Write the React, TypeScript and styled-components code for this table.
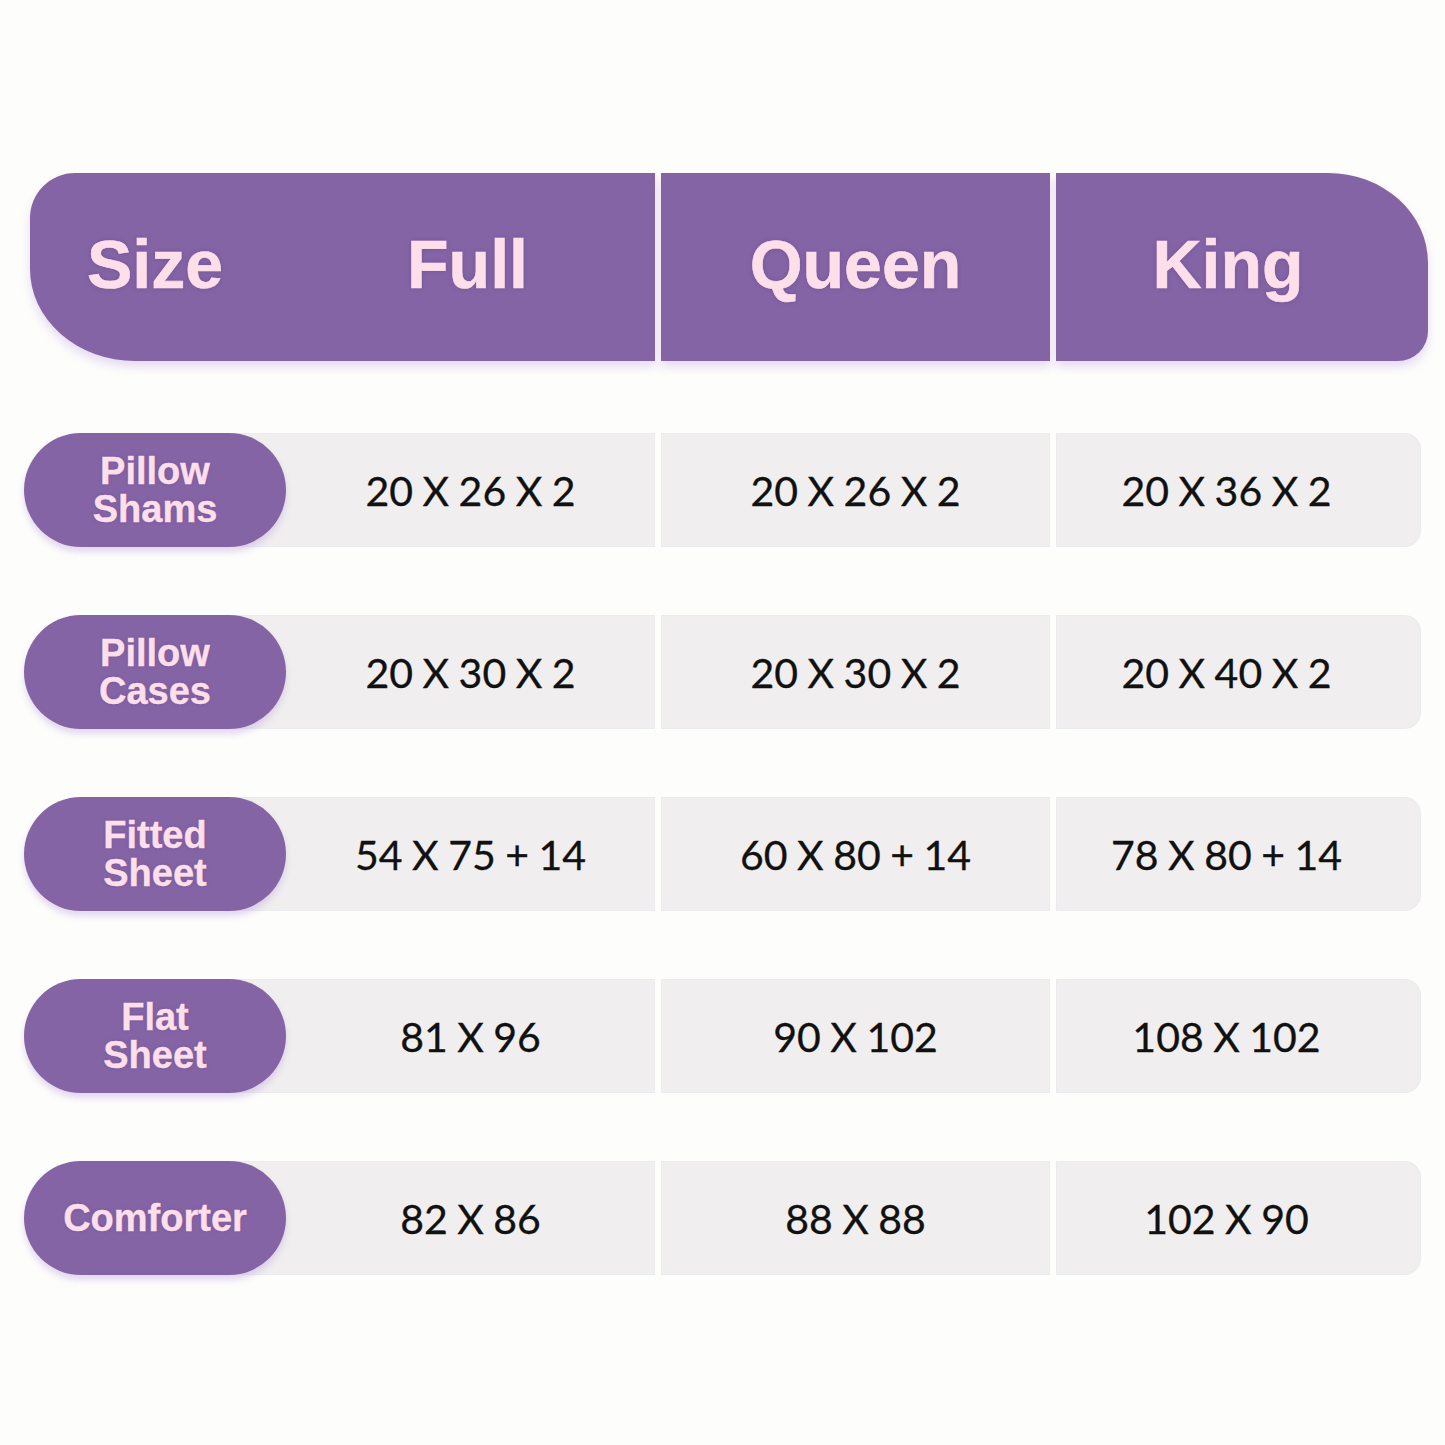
import styled, { createGlobalStyle } from 'styled-components';

const purple = '#8464a5';
const pink = '#fddfea';
const cellGrey = '#f0eeee';

const GlobalStyle = createGlobalStyle`
  html, body {
    margin: 0;
    padding: 0;
    background: #fdfdfb;
  }
`;

const columns = ['Full', 'Queen', 'King'];

const rows = [
  { label: ['Pillow', 'Shams'], values: ['20 X 26 X 2', '20 X 26 X 2', '20 X 36 X 2'] },
  { label: ['Pillow', 'Cases'], values: ['20 X 30 X 2', '20 X 30 X 2', '20 X 40 X 2'] },
  { label: ['Fitted', 'Sheet'], values: ['54 X 75 + 14', '60 X 80 + 14', '78 X 80 + 14'] },
  { label: ['Flat', 'Sheet'], values: ['81 X 96', '90 X 102', '108 X 102'] },
  { label: ['Comforter'], values: ['82 X 86', '88 X 88', '102 X 90'] },
];

export default function App() {
  return (
    <Page>
      <GlobalStyle />
      <Header>
        <HeadLead>
          <HeadText $width={250}>Size</HeadText>
          <HeadText $width={375}>{columns[0]}</HeadText>
        </HeadLead>
        <HeadCell $width={389}>
          <HeadText>{columns[1]}</HeadText>
        </HeadCell>
        <HeadCell $width={372} $last>
          <HeadText $shift={-14}>{columns[2]}</HeadText>
        </HeadCell>
      </Header>

      <Body>
        {rows.map((row) => (
          <Row key={row.label.join(' ')}>
            <Pill>
              {row.label.map((line) => (
                <span key={line}>{line}</span>
              ))}
            </Pill>
            <Cell $width={369} $first>
              {row.values[0]}
            </Cell>
            <Cell $width={389}>{row.values[1]}</Cell>
            <Cell $width={365} $last $shift={-12}>
              {row.values[2]}
            </Cell>
          </Row>
        ))}
      </Body>
    </Page>
  );
}

const Page = styled.div`
  width: 1445px;
  height: 1445px;
  box-sizing: border-box;
  padding-top: 173px;
  background: #fdfdfb;
  overflow: hidden;
`;

const Header = styled.div`
  display: flex;
  gap: 6px;
  margin-left: 30px;
  height: 188px;
  filter: drop-shadow(0 6px 5px rgba(190, 160, 230, 0.35));
`;

const HeadLead = styled.div`
  display: flex;
  width: 625px;
  background: ${purple};
  border-radius: 45px 0 0 105px / 45px 0 0 92px;
`;

const HeadCell = styled.div<{ $width: number; $last?: boolean }>`
  display: flex;
  width: ${(p) => p.$width}px;
  background: ${purple};
  border-radius: ${(p) => (p.$last ? '0 100px 30px 0 / 0 90px 30px 0' : '0')};
`;

const HeadText = styled.div<{ $width?: number; $shift?: number }>`
  display: flex;
  align-items: center;
  justify-content: center;
  flex: ${(p) => (p.$width ? `0 0 ${p.$width}px` : '1')};
  padding-bottom: 6px;
  transform: translateX(${(p) => p.$shift ?? 0}px);
  font-family: 'Liberation Sans', Arial, sans-serif;
  font-weight: 700;
  font-size: 68px;
  color: ${pink};
  -webkit-text-stroke: 0.6px ${pink};
  text-shadow: 0 0 4px rgba(100, 60, 140, 0.55);
`;

const Body = styled.div`
  display: flex;
  flex-direction: column;
  gap: 68px;
  margin-top: 72px;
  margin-left: 24px;
`;

const Row = styled.div`
  display: flex;
  align-items: stretch;
  gap: 6px;
  height: 114px;
`;

const Pill = styled.div`
  position: relative;
  z-index: 1;
  display: flex;
  flex-direction: column;
  align-items: center;
  justify-content: center;
  width: 262px;
  margin-right: -6px;
  border-radius: 57px;
  background: ${purple};
  box-shadow: 0 5px 6px rgba(180, 150, 220, 0.35);
  font-family: 'Liberation Sans', Arial, sans-serif;
  font-weight: 700;
  font-size: 38px;
  line-height: 38px;
  color: ${pink};
  -webkit-text-stroke: 0.4px ${pink};
  text-shadow: 0 0 3px rgba(100, 60, 140, 0.5);
`;

const Cell = styled.div<{ $width: number; $first?: boolean; $last?: boolean; $shift?: number }>`
  display: flex;
  align-items: center;
  justify-content: center;
  box-sizing: border-box;
  width: ${(p) => p.$width}px;
  background: ${cellGrey};
  border: 1px solid #e9ebef;
  border-radius: ${(p) => (p.$last ? '0 16px 16px 0' : '0')};
  ${(p) => (p.$first ? 'margin-left: -60px; width: ' + (p.$width + 60) + 'px; padding-left: 60px;' : '')}
  font-family: Lato, 'Open Sans', sans-serif;
  font-size: 41px;
  word-spacing: -1px;
  color: #111;
  -webkit-text-stroke: 0.3px #111;
  text-indent: ${(p) => (p.$shift ?? 0) * 2}px;
`;
